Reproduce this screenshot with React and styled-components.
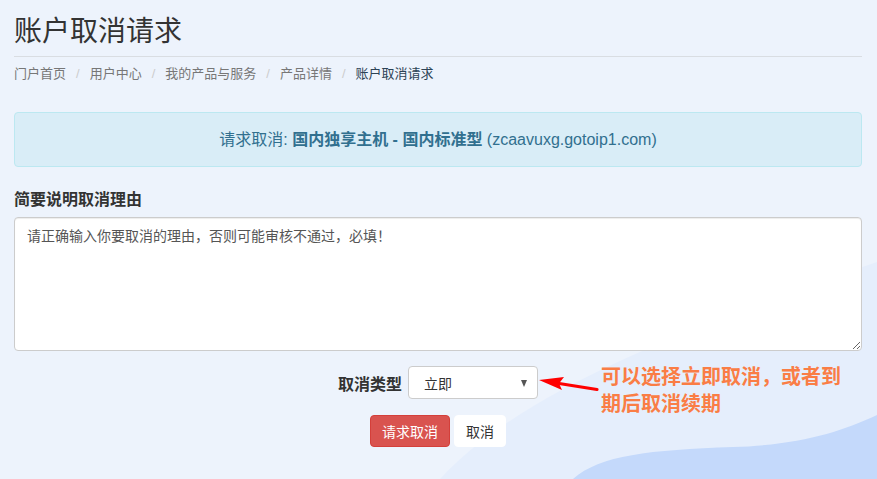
import React from "react";
import styled, { createGlobalStyle } from "styled-components";

const GlobalStyle = createGlobalStyle`
  html, body {
    margin: 0;
    padding: 0;
    background: #edf3fc;
  }
  body {
    font-family: "Liberation Sans", "Noto Sans CJK SC", sans-serif;
    color: #333;
  }
`;

const Page = styled.div`
  position: relative;
  min-height: 100vh;
  overflow: hidden;
`;

const Waves = styled.svg`
  position: absolute;
  left: 0;
  top: 0;
  width: 877px;
  height: 479px;
  z-index: 0;
`;

const Content = styled.div`
  position: relative;
  z-index: 1;
  padding: 16px 15px 0 14px;
`;

const PageHeader = styled.div`
  padding-bottom: 8px;
  border-bottom: 1px solid #d9dde2;
`;

const Title = styled.h1`
  margin: 0;
  font-size: 28px;
  line-height: 32px;
  font-weight: 400;
  color: #333;
`;

const Crumbs = styled.ol`
  list-style: none;
  margin: 7px 0 0;
  padding: 0;
  display: flex;
  font-size: 13px;
  line-height: 20px;
`;

const Crumb = styled.li`
  color: ${(p) => (p.$active ? "#2c4255" : "#777")};
`;

const Sep = styled.li`
  color: #ccc;
  padding: 0 10px;
`;

const Alert = styled.div`
  margin-top: 28px;
  padding: 15px;
  background: #d9edf7;
  border: 1px solid #bce8f1;
  border-radius: 4px;
  color: #31708f;
  font-size: 16px;
  line-height: 23px;
  text-align: center;

  strong {
    font-weight: 700;
  }
`;

const FieldLabel = styled.label`
  display: block;
  margin-top: 22px;
  font-size: 16px;
  line-height: 22px;
  font-weight: 700;
  color: #333;
`;

const Reason = styled.textarea`
  display: block;
  box-sizing: border-box;
  width: 100%;
  height: 134px;
  margin-top: 6px;
  padding: 8px 12px;
  border: 1px solid #ccc;
  border-radius: 4px;
  background: #fff;
  font-family: "Liberation Sans", "Noto Sans CJK SC", sans-serif;
  font-size: 14px;
  line-height: 20px;
  color: #555;
  box-shadow: inset 0 1px 1px rgba(0, 0, 0, 0.075);
`;

const TypeRow = styled.div`
  margin-top: 15px;
  display: flex;
  justify-content: center;
  align-items: center;
  gap: 6px;
`;

const TypeLabel = styled.span`
  font-size: 16px;
  font-weight: 700;
  color: #333;
`;

const SelectWrap = styled.div`
  position: relative;
`;

const SelectBox = styled.div`
  box-sizing: border-box;
  width: 130px;
  height: 33px;
  padding: 0 10px 0 15px;
  display: flex;
  align-items: center;
  justify-content: space-between;
  background: #fff;
  border: 1px solid #ccc;
  border-radius: 4px;
  font-size: 14px;
  color: #333;
`;

const Caret = styled.span`
  width: 0;
  height: 0;
  border-left: 3.5px solid transparent;
  border-right: 3.5px solid transparent;
  border-top: 7px solid #555;
  margin-top: 1px;
`;

const Callout = styled.div`
  position: absolute;
  top: -2px;
  left: 100%;
  display: flex;
  align-items: flex-start;
`;

const CalloutText = styled.div`
  white-space: nowrap;
  font-size: 20px;
  line-height: 27px;
  font-weight: 700;
  color: #fa7d45;
`;

const Actions = styled.div`
  margin-top: 16px;
  display: flex;
  justify-content: center;
  gap: 4px;
`;

const Button = styled.button`
  height: 32px;
  padding: 0 11px;
  border: 1px solid ${(p) => (p.$danger ? "#d43f3a" : "#fff")};
  border-radius: 4px;
  background: ${(p) => (p.$danger ? "#d9534f" : "#fff")};
  color: ${(p) => (p.$danger ? "#fff" : "#333")};
  font-family: "Liberation Sans", "Noto Sans CJK SC", sans-serif;
  font-size: 14px;
  cursor: pointer;
`;

const crumbs = ["门户首页", "用户中心", "我的产品与服务", "产品详情", "账户取消请求"];

export default function App() {
  return (
    <Page>
      <GlobalStyle />
      <Waves viewBox="0 0 877 479" preserveAspectRatio="none">
        <path d="M440 479 C520 392 680 330 877 262 L877 479 Z" fill="#e5eefc" />
        <path
          d="M573 479 C600 455 650 450 733 447 C800 445 840 432 877 415 L877 479 Z"
          fill="#c4d9fb"
        />
      </Waves>
      <Content>
        <PageHeader>
          <Title>账户取消请求</Title>
        </PageHeader>
        <Crumbs>
          {crumbs.map((c, i) => (
            <React.Fragment key={c}>
              {i > 0 && <Sep>/</Sep>}
              <Crumb $active={i === crumbs.length - 1}>{c}</Crumb>
            </React.Fragment>
          ))}
        </Crumbs>

        <Alert>
          请求取消: <strong>国内独享主机 - 国内标准型</strong> (zcaavuxg.gotoip1.com)
        </Alert>

        <FieldLabel htmlFor="reason">简要说明取消理由</FieldLabel>
        <Reason id="reason" defaultValue="请正确输入你要取消的理由，否则可能审核不通过，必填！" />

        <TypeRow>
          <TypeLabel>取消类型</TypeLabel>
          <SelectWrap>
            <SelectBox>
              <span>立即</span>
              <Caret />
            </SelectBox>
            <Callout>
              <svg width="63" height="30" viewBox="0 0 63 30">
                <line x1="18" y1="19" x2="59" y2="25.5" stroke="#f00" strokeWidth="3.2" strokeLinecap="round" />
                <polygon points="1,16 26,13 21,19.5 24,26" fill="#f00" />
              </svg>
              <CalloutText>
                可以选择立即取消，或者到
                <br />
                期后取消续期
              </CalloutText>
            </Callout>
          </SelectWrap>
        </TypeRow>

        <Actions>
          <Button $danger>请求取消</Button>
          <Button>取消</Button>
        </Actions>
      </Content>
    </Page>
  );
}
